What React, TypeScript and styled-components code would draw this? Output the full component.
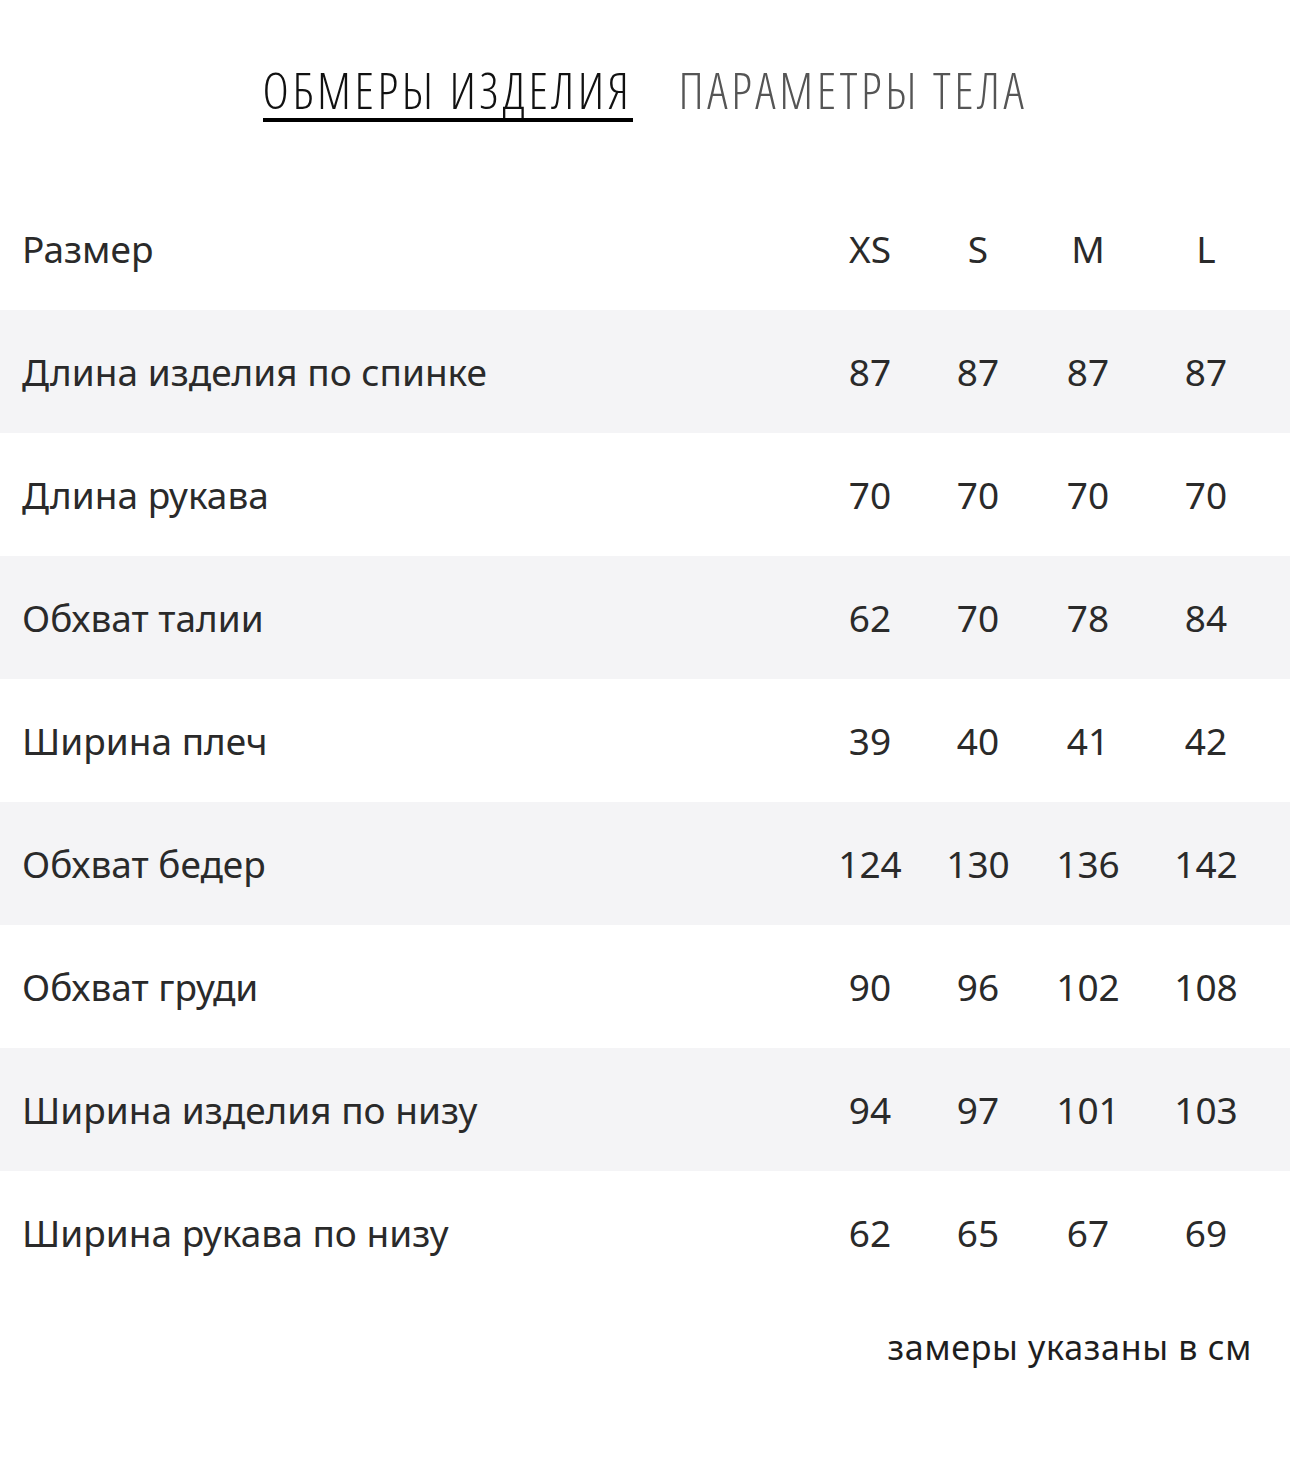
import React from "react";
import styled, { createGlobalStyle } from "styled-components";

const Global = createGlobalStyle`
  html, body { margin: 0; padding: 0; background: #fff; }
  body { font-family: "Noto Sans", "DejaVu Sans", sans-serif; color: #2a2a2a; }
`;

const Page = styled.div`
  width: 1290px;
  min-height: 1473px;
  background: #fff;
`;

const Tabs = styled.div`
  display: flex;
  justify-content: center;
  gap: 46px;
  padding-top: 63px;
`;

const Tab = styled.div<{ $active?: boolean }>`
  font-family: "Open Sans", "Noto Sans", sans-serif;
  font-weight: 300;
  font-stretch: 75%;
  font-size: 50px;
  letter-spacing: 3.6px;
  line-height: 55px;
  color: ${(p) => (p.$active ? "#111" : "#555")};
  padding-bottom: 0;
  border-bottom: 4px solid ${(p) => (p.$active ? "#000" : "transparent")};
`;

const Table = styled.div`
  margin-top: 65px;
  display: flex;
  flex-direction: column;
`;

const Row = styled.div<{ $shaded?: boolean }>`
  display: grid;
  grid-template-columns: 1fr 108px 108px 112px 124px;
  padding: 0 22px;
  height: 123px;
  align-items: center;
  background: ${(p) => (p.$shaded ? "#f4f4f6" : "#fff")};
  font-size: 37px;
  color: #2a2a2a;
`;

const Label = styled.div``;

const Cell = styled.div`
  text-align: center;
`;

const Footer = styled.div`
  text-align: right;
  padding: 30px 38px 0 0;
  font-size: 34px;
  color: #1e1e1e;
  letter-spacing: 0.7px;
`;

const sizes = ["XS", "S", "M", "L"];
const rows: [string, number[]][] = [
  ["Длина изделия по спинке", [87, 87, 87, 87]],
  ["Длина рукава", [70, 70, 70, 70]],
  ["Обхват талии", [62, 70, 78, 84]],
  ["Ширина плеч", [39, 40, 41, 42]],
  ["Обхват бедер", [124, 130, 136, 142]],
  ["Обхват груди", [90, 96, 102, 108]],
  ["Ширина изделия по низу", [94, 97, 101, 103]],
  ["Ширина рукава по низу", [62, 65, 67, 69]],
];

export default function App() {
  return (
    <Page>
      <Global />
      <Tabs>
        <Tab $active>ОБМЕРЫ ИЗДЕЛИЯ</Tab>
        <Tab>ПАРАМЕТРЫ ТЕЛА</Tab>
      </Tabs>
      <Table>
        <Row>
          <Label>Размер</Label>
          {sizes.map((s) => (
            <Cell key={s}>{s}</Cell>
          ))}
        </Row>
        {rows.map(([name, vals], i) => (
          <Row key={name} $shaded={i % 2 === 0}>
            <Label>{name}</Label>
            {vals.map((v, j) => (
              <Cell key={j}>{v}</Cell>
            ))}
          </Row>
        ))}
      </Table>
      <Footer>замеры указаны в см</Footer>
    </Page>
  );
}
